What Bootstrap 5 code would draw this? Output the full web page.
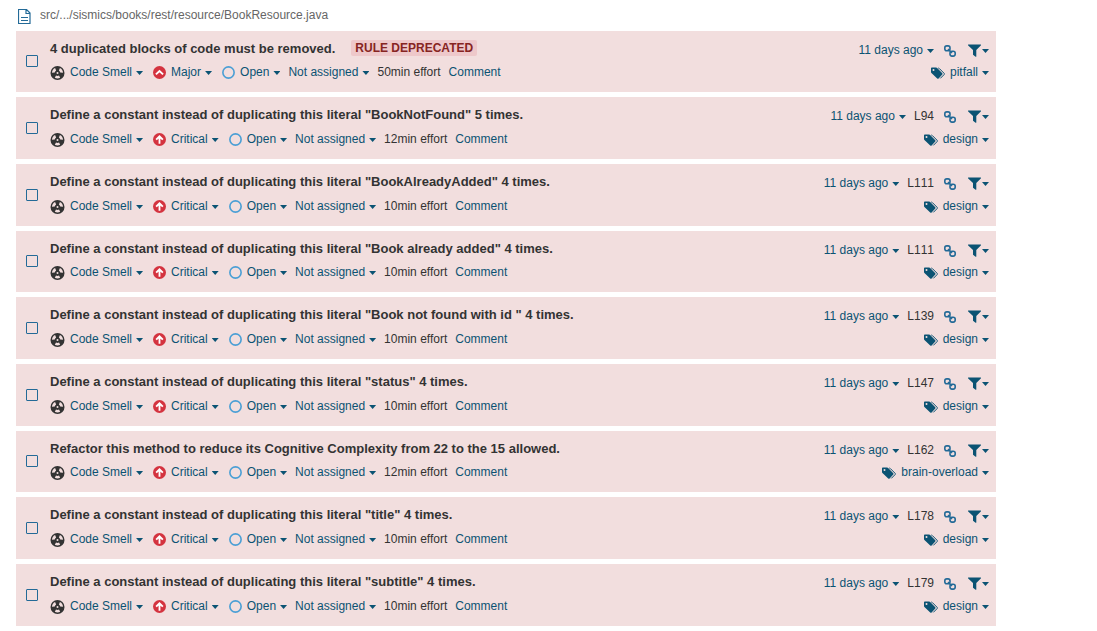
<!DOCTYPE html>
<html lang="en">
<head>
<meta charset="utf-8">
<meta name="viewport" content="width=device-width, initial-scale=1">
<title>Issues</title>
<link href="https://cdn.jsdelivr.net/npm/bootstrap@5.3.0/dist/css/bootstrap.min.css" rel="stylesheet">
<style>
  body { font: 12px/16px "Liberation Sans", Arial, sans-serif; color: #333; background: #fff; }
  .page { padding: 7px 101px 5px 16px; }
  .file-path { padding-left: 2px; gap: 9px; color: #666; height: 24px; }
  .file-path svg { margin-top: 2px; }
  .issue-list { gap: 5px; }
  .issue { background: #f2dede; min-height: 62px; padding: 10px 7px 12px 10px; }
  .issue:nth-child(3n+1) { min-height: 61px; }
  .issue-title { font-size: 13px; line-height: 16px; font-weight: 700; margin: 0; }
  .issue-check { appearance: none; width: 12px; height: 12px; margin: 1px 0 0; border: 1px solid #236a97; border-radius: 1px; background: transparent; }
  .issue-check:checked { background: #236a97; }
  .issue-body { margin-left: 12px; }
  .pick, .plain-link { color: #0b5373; background: none; border: 0; padding: 0; line-height: 16px; text-decoration: none; white-space: nowrap; }
  .pick { display: inline-flex; align-items: center; }
  .pick::after { content: ""; width: 7px; height: 4px; margin: 2px 0 0 4px; background: #0b5373; clip-path: polygon(0 0, 100% 0, 50% 100%); }
  .pick svg { margin-right: 5px; margin-top: 1px; }
  .filter svg { margin-right: 0; }
  .filter::after { margin-left: 1px; }
  .meta-row { gap: 8px; }
  .date-row { padding-top: 1px; }
  .line-number { font-kerning: none; }
  .gap-type { gap: 10px; }
  .permalink { padding: 2px 4px 0 2px; }
  .deprecated { font-size: 12px; line-height: 16px; font-weight: 700; color: #862422; background: #eec8ca; border-radius: 2px; padding: 0 4px; margin: -1px 0 1px 16px; }
  svg { flex: none; }
</style>
</head>
<body>
<svg class="d-none" aria-hidden="true">
  <symbol id="smell" viewBox="0 0 14 14">
    <circle cx="7" cy="7" r="7" fill="#333"/>
    <path d="M4.600 1.900 5.600 4.500A2.800 2.800 0 0 0 4.300 6.600L1.500 6.800A5.600 5.600 0 0 1 4.600 1.900ZM9.400 1.900 8.400 4.500A2.800 2.800 0 0 1 9.700 6.600l2.800.2A5.600 5.600 0 0 0 9.400 1.900ZM4.300 11.800 5.500 9.500a2.800 2.800 0 0 0 3 0L9.700 11.800a5.600 5.600 0 0 1-5.400 0Z" fill="#f2dede"/>
    <circle cx="7" cy="7" r="1" fill="#f2dede"/>
  </symbol>
  <symbol id="major" viewBox="0 0 12 12">
    <circle cx="6" cy="6" r="6" fill="#d4333f"/>
    <path d="M2.700 7.700 6 4.600l3.300 3.100" fill="none" stroke="#fff" stroke-width="1.800"/>
  </symbol>
  <symbol id="critical" viewBox="0 0 12 12">
    <circle cx="6" cy="6" r="6" fill="#d4333f"/>
    <path d="M6 10V3.200M2.900 6.200 6 3.100l3.100 3.100" fill="none" stroke="#fff" stroke-width="1.700"/>
  </symbol>
  <symbol id="open" viewBox="0 0 12 12"><circle cx="6" cy="6" r="5.200" fill="none" stroke="#4b9fd5" stroke-width="1.500"/></symbol>
  <symbol id="chain" viewBox="0 0 12 12">
    <g fill="none" stroke="#236a97" stroke-width="1.600">
      <rect x=".8" y=".9" width="5.200" height="4.800" rx="2"/><rect x="6" y="6.300" width="5.200" height="4.800" rx="2"/>
      <path d="m4 4.200 4 3.800"/>
    </g>
  </symbol>
  <symbol id="funnel" viewBox="0 0 13 13"><path d="M.4.6h12.200c.4 0 .5.500.2.800L8.300 6v6.400c0 .4-.4.500-.7.300L5 10.700V6L.2 1.400C-.1 1.100 0 .6.4.6Z" fill="#0b5373"/></symbol>
  <symbol id="tags" viewBox="0 0 14 12">
    <path fill-rule="evenodd" d="M0 1.600C0 1 .5.6 1 .6h4c.5 0 1 .3 1.400.6l4.900 5c.4.4.4 1 0 1.400l-3.700 3.800c-.4.4-1 .4-1.400 0L.7 6.300C.3 5.900 0 5.400 0 4.900ZM2.500 2a1 1 0 1 0 0 2 1 1 0 0 0 0-2Z" fill="#0b5373"/>
    <path d="M7.300 1c.5.100.8.300 1.100.6l4.700 4.700c.4.4.4.900 0 1.300L9.300 11.400" fill="none" stroke="#0b5373"/>
  </symbol>
</svg>

<main class="page">
  <header class="file-path d-flex align-items-start">
    <svg width="13" height="15" viewBox="0 0 13 15" aria-hidden="true"><path d="M.5.500h8L12 4v10.500H.5ZM8 .5v4h4M3 8.500h7M3 11.500h7" fill="none" stroke="#236a97" stroke-width="1.200"/></svg>
    <span>src/.../sismics/books/rest/resource/BookResource.java</span>
  </header>
  <div class="issue-list d-flex flex-column" id="issues"></div>
</main>

<script>
  const dup = (literal, times = 4) => `Define a constant instead of duplicating this literal "${literal}" ${times} times.`;
  const issues = [
    { title: "4 duplicated blocks of code must be removed.", deprecated: true, severity: "Major", effort: 50, tag: "pitfall" },
    { title: dup("BookNotFound", 5), line: 94, effort: 12 },
    { title: dup("BookAlreadyAdded"), line: 111 },
    { title: dup("Book already added"), line: 111 },
    { title: dup("Book not found with id "), line: 139 },
    { title: dup("status"), line: 147 },
    { title: "Refactor this method to reduce its Cognitive Complexity from 22 to the 15 allowed.", line: 162, effort: 12, tag: "brain-overload" },
    { title: dup("title"), line: 178 },
    { title: dup("subtitle"), line: 179 }
  ];
  const icon = (id, w, h = w) => `<svg width="${w}" height="${h}" aria-hidden="true"><use href="#${id}"/></svg>`;

  document.getElementById("issues").innerHTML = issues.map(({ title, deprecated, line, severity = "Critical", effort = 10, tag = "design" }, i) => `
    <article class="issue d-flex">
      <input class="issue-check align-self-center flex-shrink-0" type="checkbox" aria-labelledby="issue-${i}">
      <div class="issue-body flex-grow-1 d-flex flex-column justify-content-between">
        <div class="d-flex align-items-center">
          <h2 class="issue-title" id="issue-${i}">${title}</h2>
          ${deprecated ? '<span class="deprecated">RULE DEPRECATED</span>' : ""}
        </div>
        <div class="meta-row d-flex align-items-center">
          <div class="gap-type d-flex">
            <button class="pick" type="button">${icon("smell", 15, 14)}Code Smell</button>
            <button class="pick" type="button">${icon(severity.toLowerCase(), 13)}${severity}</button>
            <button class="pick" type="button">${icon("open", 13)}Open</button>
          </div>
          <button class="pick" type="button">Not assigned</button>
          <span>${effort}min effort</span>
          <button class="plain-link" type="button">Comment</button>
        </div>
      </div>
      <div class="d-flex flex-column justify-content-between align-items-end">
        <div class="meta-row date-row d-flex align-items-center">
          <button class="pick" type="button">11 days ago</button>
          ${line ? `<span class="line-number">L${line}</span>` : ""}
          <a class="plain-link permalink d-flex" href="#issue-${i}" aria-label="Permalink">${icon("chain", 12)}</a>
          <button class="pick filter" type="button" aria-label="Filter">${icon("funnel", 13)}</button>
        </div>
        <button class="pick" type="button">${icon("tags", 14, 12)}${tag}</button>
      </div>
    </article>`).join("");
</script>
<script src="https://cdn.jsdelivr.net/npm/bootstrap@5.3.0/dist/js/bootstrap.bundle.min.js"></script>
</body>
</html>
